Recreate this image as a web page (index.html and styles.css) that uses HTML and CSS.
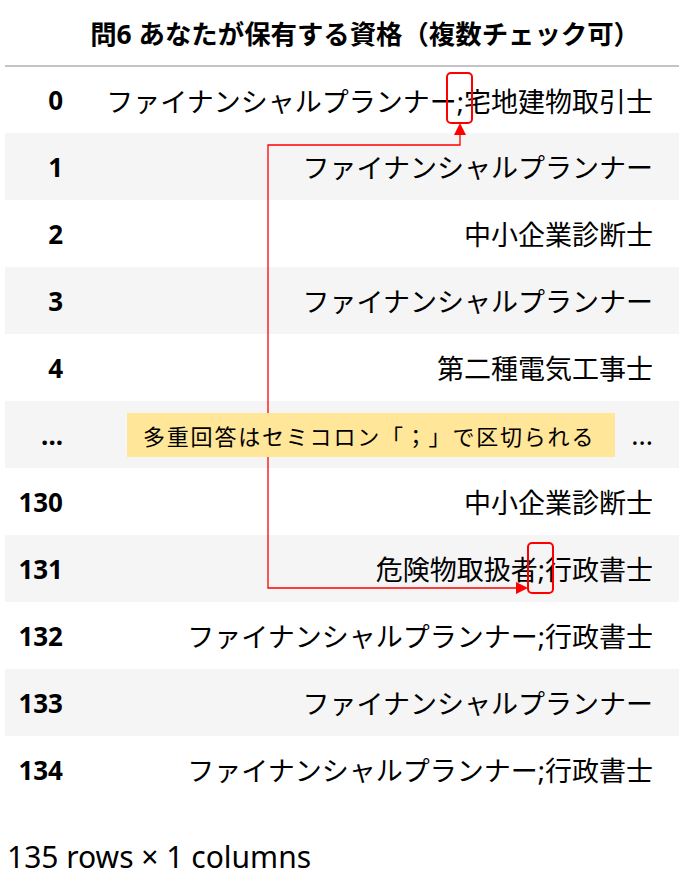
FILE: index.html
```html
<!DOCTYPE html>
<html lang="ja">
<head>
    <meta charset="UTF-8">
    <title>DataFrame</title>
    <link rel="stylesheet" href="styles.css">
</head>
<body>
    <div class="frame">
        <table class="dataframe">
            <thead>
                <tr><th class="blank"></th><th class="colname">問6 あなたが保有する資格（複数チェック可）</th></tr>
            </thead>
            <tbody>
                <tr><th>0</th><td>ファイナンシャルプランナー;宅地建物取引士</td></tr>
                <tr><th>1</th><td>ファイナンシャルプランナー</td></tr>
                <tr><th>2</th><td>中小企業診断士</td></tr>
                <tr><th>3</th><td>ファイナンシャルプランナー</td></tr>
                <tr><th>4</th><td>第二種電気工事士</td></tr>
                <tr><th>...</th><td>...</td></tr>
                <tr><th>130</th><td>中小企業診断士</td></tr>
                <tr><th>131</th><td>危険物取扱者;行政書士</td></tr>
                <tr><th>132</th><td>ファイナンシャルプランナー;行政書士</td></tr>
                <tr><th>133</th><td>ファイナンシャルプランナー</td></tr>
                <tr><th>134</th><td>ファイナンシャルプランナー;行政書士</td></tr>
            </tbody>
        </table>

        <!-- 注記の矢印と枠 -->
        <svg class="marks" width="679" height="804" viewBox="0 0 679 804">
            <rect x="447" y="73" width="25" height="50" rx="4" fill="none" stroke="#ff0000" stroke-width="2"/>
            <rect x="528" y="543" width="25" height="50" rx="4" fill="none" stroke="#ff0000" stroke-width="2"/>
            <polyline points="460,133 460,145 268,145 268,588 518,588" fill="none" stroke="#ff0000" stroke-width="1.3"/>
            <polygon points="460,123 454,135 466,135" fill="#ff0000"/>
            <polygon points="528,588 516,582 516,594" fill="#ff0000"/>
        </svg>
        <div class="note">多重回答はセミコロン「；」で区切られる</div>
    </div>
    <p class="shape">135 rows × 1 columns</p>
</body>
</html>
```

FILE: styles.css
```css
body {
    margin: 0;
    color: #000;
    font-family: "Noto Sans", "Noto Sans CJK JP", sans-serif;
}
.frame {
    position: relative;
    padding-left: 5px;
}
.dataframe {
    border-collapse: collapse;
    width: 674px;
    font-size: 27px;
}
.dataframe thead th {
    height: 65px;
    border-bottom: 2px solid #c4c4c4;
    padding: 0;
    font-weight: bold;
    font-size: 26.4px;
    vertical-align: middle;
}
.dataframe .colname {
    text-align: right;
    padding-right: 39px;
}
.dataframe tbody tr {
    height: 67px;
}
.dataframe tbody tr:nth-child(even) {
    background-color: #f5f5f5;
}
.dataframe tbody th {
    width: 58px;
    padding: 0 13px 0 0;
    text-align: right;
    font-weight: bold;
    font-size: 26px;
}
.dataframe td {
    padding: 0 26px 0 0;
    text-align: right;
    white-space: nowrap;
}
.marks {
    position: absolute;
    top: 0;
    left: 0;
}
.note {
    position: absolute;
    left: 127px;
    top: 413px;
    width: 472px;
    height: 44px;
    padding-left: 16px;
    background-color: #ffe699;
    font-family: "Noto Sans CJK JP", sans-serif;
    font-size: 22px;
    letter-spacing: 1.8px;
    line-height: 44px;
}
.shape {
    margin: 36px 0 0 7px;
    font-size: 30px;
    line-height: 36px;
}
```
